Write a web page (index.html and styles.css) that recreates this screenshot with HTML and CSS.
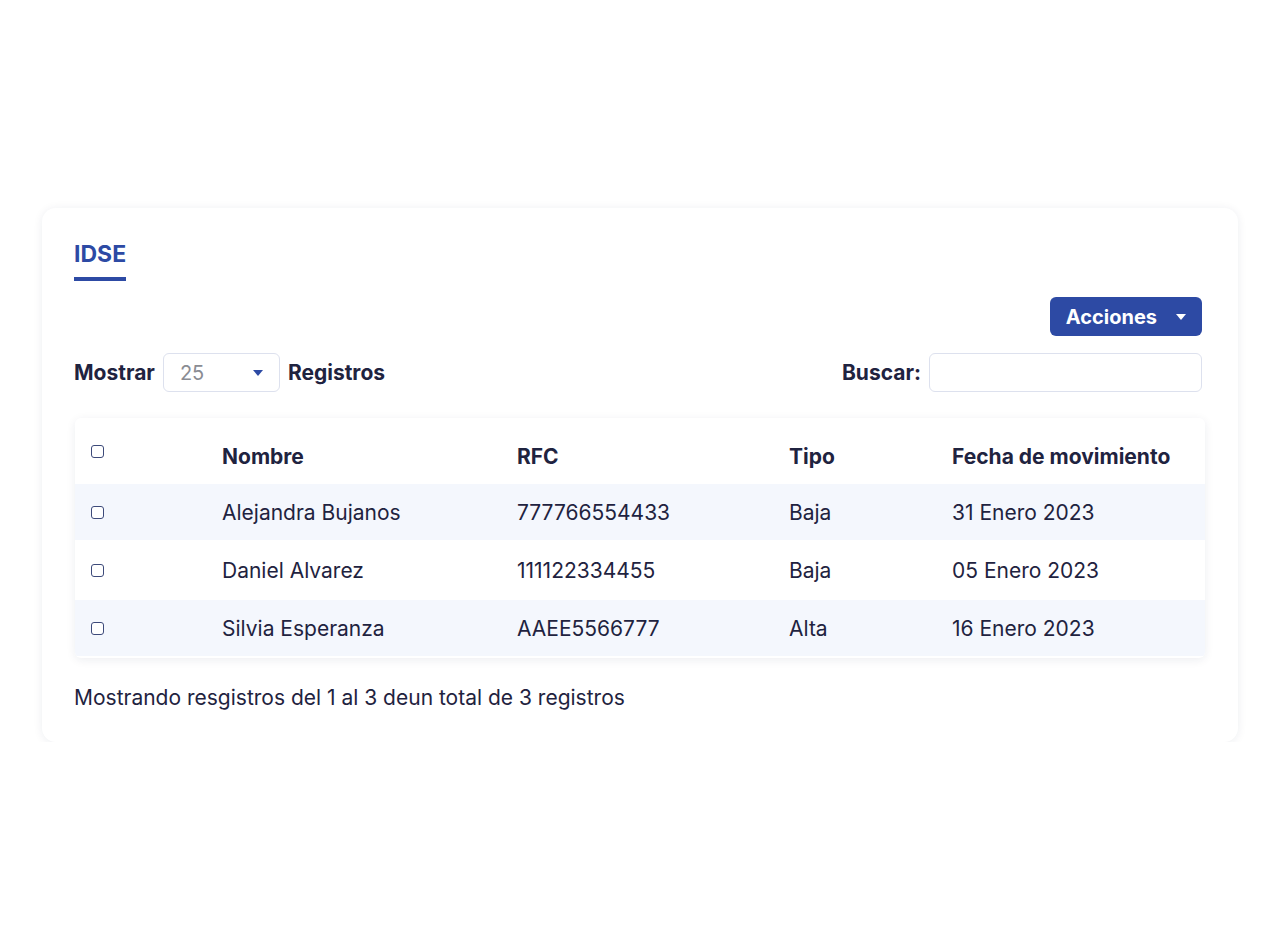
FILE: index.html
```html
<!DOCTYPE html>
<html lang="es">
<head>
  <meta charset="UTF-8">
  <title>IDSE</title>
  <meta name="viewport" content="width=device-width, initial-scale=1.0">
  <link rel="stylesheet" href="styles.css">
</head>
<body>

<div class="card">
  <div class="tabs">
    <span class="tab active">IDSE</span>
  </div>

  <div class="actions-row">
    <button class="btn-actions">Acciones <span class="caret"></span></button>
  </div>

  <div class="filters">
    <div class="show">
      <label>Mostrar</label>
      <div class="select-box">
        <span>25</span>
        <span class="caret blue"></span>
      </div>
      <label>Registros</label>
    </div>
    <div class="search">
      <label>Buscar:</label>
      <input type="text">
    </div>
  </div>

  <div class="table-wrap">
    <table>
      <thead>
        <tr>
          <th class="col-check"><input type="checkbox"></th>
          <th class="col-name">Nombre</th>
          <th class="col-rfc">RFC</th>
          <th class="col-type">Tipo</th>
          <th>Fecha de movimiento</th>
        </tr>
      </thead>
      <tbody>
        <tr>
          <td class="col-check"><input type="checkbox"></td>
          <td>Alejandra Bujanos</td>
          <td>777766554433</td>
          <td>Baja</td>
          <td>31 Enero 2023</td>
        </tr>
        <tr>
          <td class="col-check"><input type="checkbox"></td>
          <td>Daniel Alvarez</td>
          <td>111122334455</td>
          <td>Baja</td>
          <td>05 Enero 2023</td>
        </tr>
        <tr>
          <td class="col-check"><input type="checkbox"></td>
          <td>Silvia Esperanza</td>
          <td>AAEE5566777</td>
          <td>Alta</td>
          <td>16 Enero 2023</td>
        </tr>
      </tbody>
    </table>
  </div>

  <p class="summary">Mostrando resgistros del 1 al 3 deun total de 3 registros</p>
</div>

</body>
</html>
```

FILE: styles.css
```css
* {
  box-sizing: border-box;
}

body {
  margin: 0;
  background: #fff;
  font-family: Inter, "Noto Sans", sans-serif;
  color: #1f2340;
}

.card {
  width: 1196px;
  margin: 208px 0 0 42px;
  padding: 32px 36px 31px 32px;
  background: #fff;
  border-radius: 14px;
  box-shadow: 0 1px 10px rgba(30, 40, 80, 0.08);
}

.tabs {
  display: flex;
}

.tab {
  font-size: 23px;
  font-weight: 700;
  line-height: 28px;
  color: #2d4aa4;
  padding-bottom: 9px;
  border-bottom: 4px solid #2d4aa4;
}

.actions-row {
  display: flex;
  justify-content: flex-end;
  margin-top: 16px;
}

.btn-actions {
  display: flex;
  align-items: center;
  gap: 19px;
  height: 39px;
  padding: 0 16px;
  background: #2d4aa4;
  color: #fff;
  border: none;
  border-radius: 6px;
  font-family: inherit;
  font-size: 20px;
  font-weight: 700;
  cursor: pointer;
}

.caret {
  width: 0;
  height: 0;
  border-left: 5px solid transparent;
  border-right: 5px solid transparent;
  border-top: 6px solid #fff;
}

.caret.blue {
  border-top-color: #2d4aa4;
}

.filters {
  display: flex;
  justify-content: space-between;
  align-items: center;
  margin-top: 17px;
}

.show,
.search {
  display: flex;
  align-items: center;
  gap: 8px;
}

.filters label {
  font-size: 21px;
  font-weight: 700;
}

.select-box {
  display: flex;
  align-items: center;
  justify-content: space-between;
  width: 117px;
  height: 39px;
  padding: 0 16px 0 16px;
  border: 1px solid #dde1ee;
  border-radius: 6px;
  font-size: 20px;
  color: #8a8c93;
}

.search input {
  width: 273px;
  height: 39px;
  border: 1px solid #dde1ee;
  border-radius: 6px;
  font-size: 16px;
  padding: 0 10px;
}

.table-wrap {
  margin-top: 26px;
  margin-left: 1px;
  margin-right: -3px;
  border-radius: 6px;
  box-shadow: 0 2px 10px rgba(30, 40, 80, 0.08);
  overflow: hidden;
  padding-bottom: 2px;
}

table {
  width: 100%;
  border-collapse: collapse;
}

th,
td {
  text-align: left;
  font-size: 21px;
  padding: 0;
}

th {
  font-weight: 700;
  height: 66px;
  padding-top: 10px;
}

td {
  font-weight: 400;
  height: 56px;
}

tbody tr:nth-child(odd) {
  background: #f4f7fd;
}

tbody tr:nth-child(2) td {
  height: 60px;
}

.col-check {
  width: 147px;
  padding-left: 16px;
}

.col-name {
  width: 295px;
}

.col-rfc {
  width: 272px;
}

.col-type {
  width: 163px;
}

input[type="checkbox"] {
  width: 13px;
  height: 13px;
  margin: 0;
  appearance: none;
  border: 1px solid #3d4a7a;
  border-radius: 3px;
  background: #fff;
  vertical-align: middle;
}

th input[type="checkbox"] {
  position: relative;
  top: -6px;
}

td input[type="checkbox"] {
  position: relative;
  top: -1px;
}

.summary {
  margin: 27px 0 0;
  font-size: 21px;
  line-height: 26px;
}
```
